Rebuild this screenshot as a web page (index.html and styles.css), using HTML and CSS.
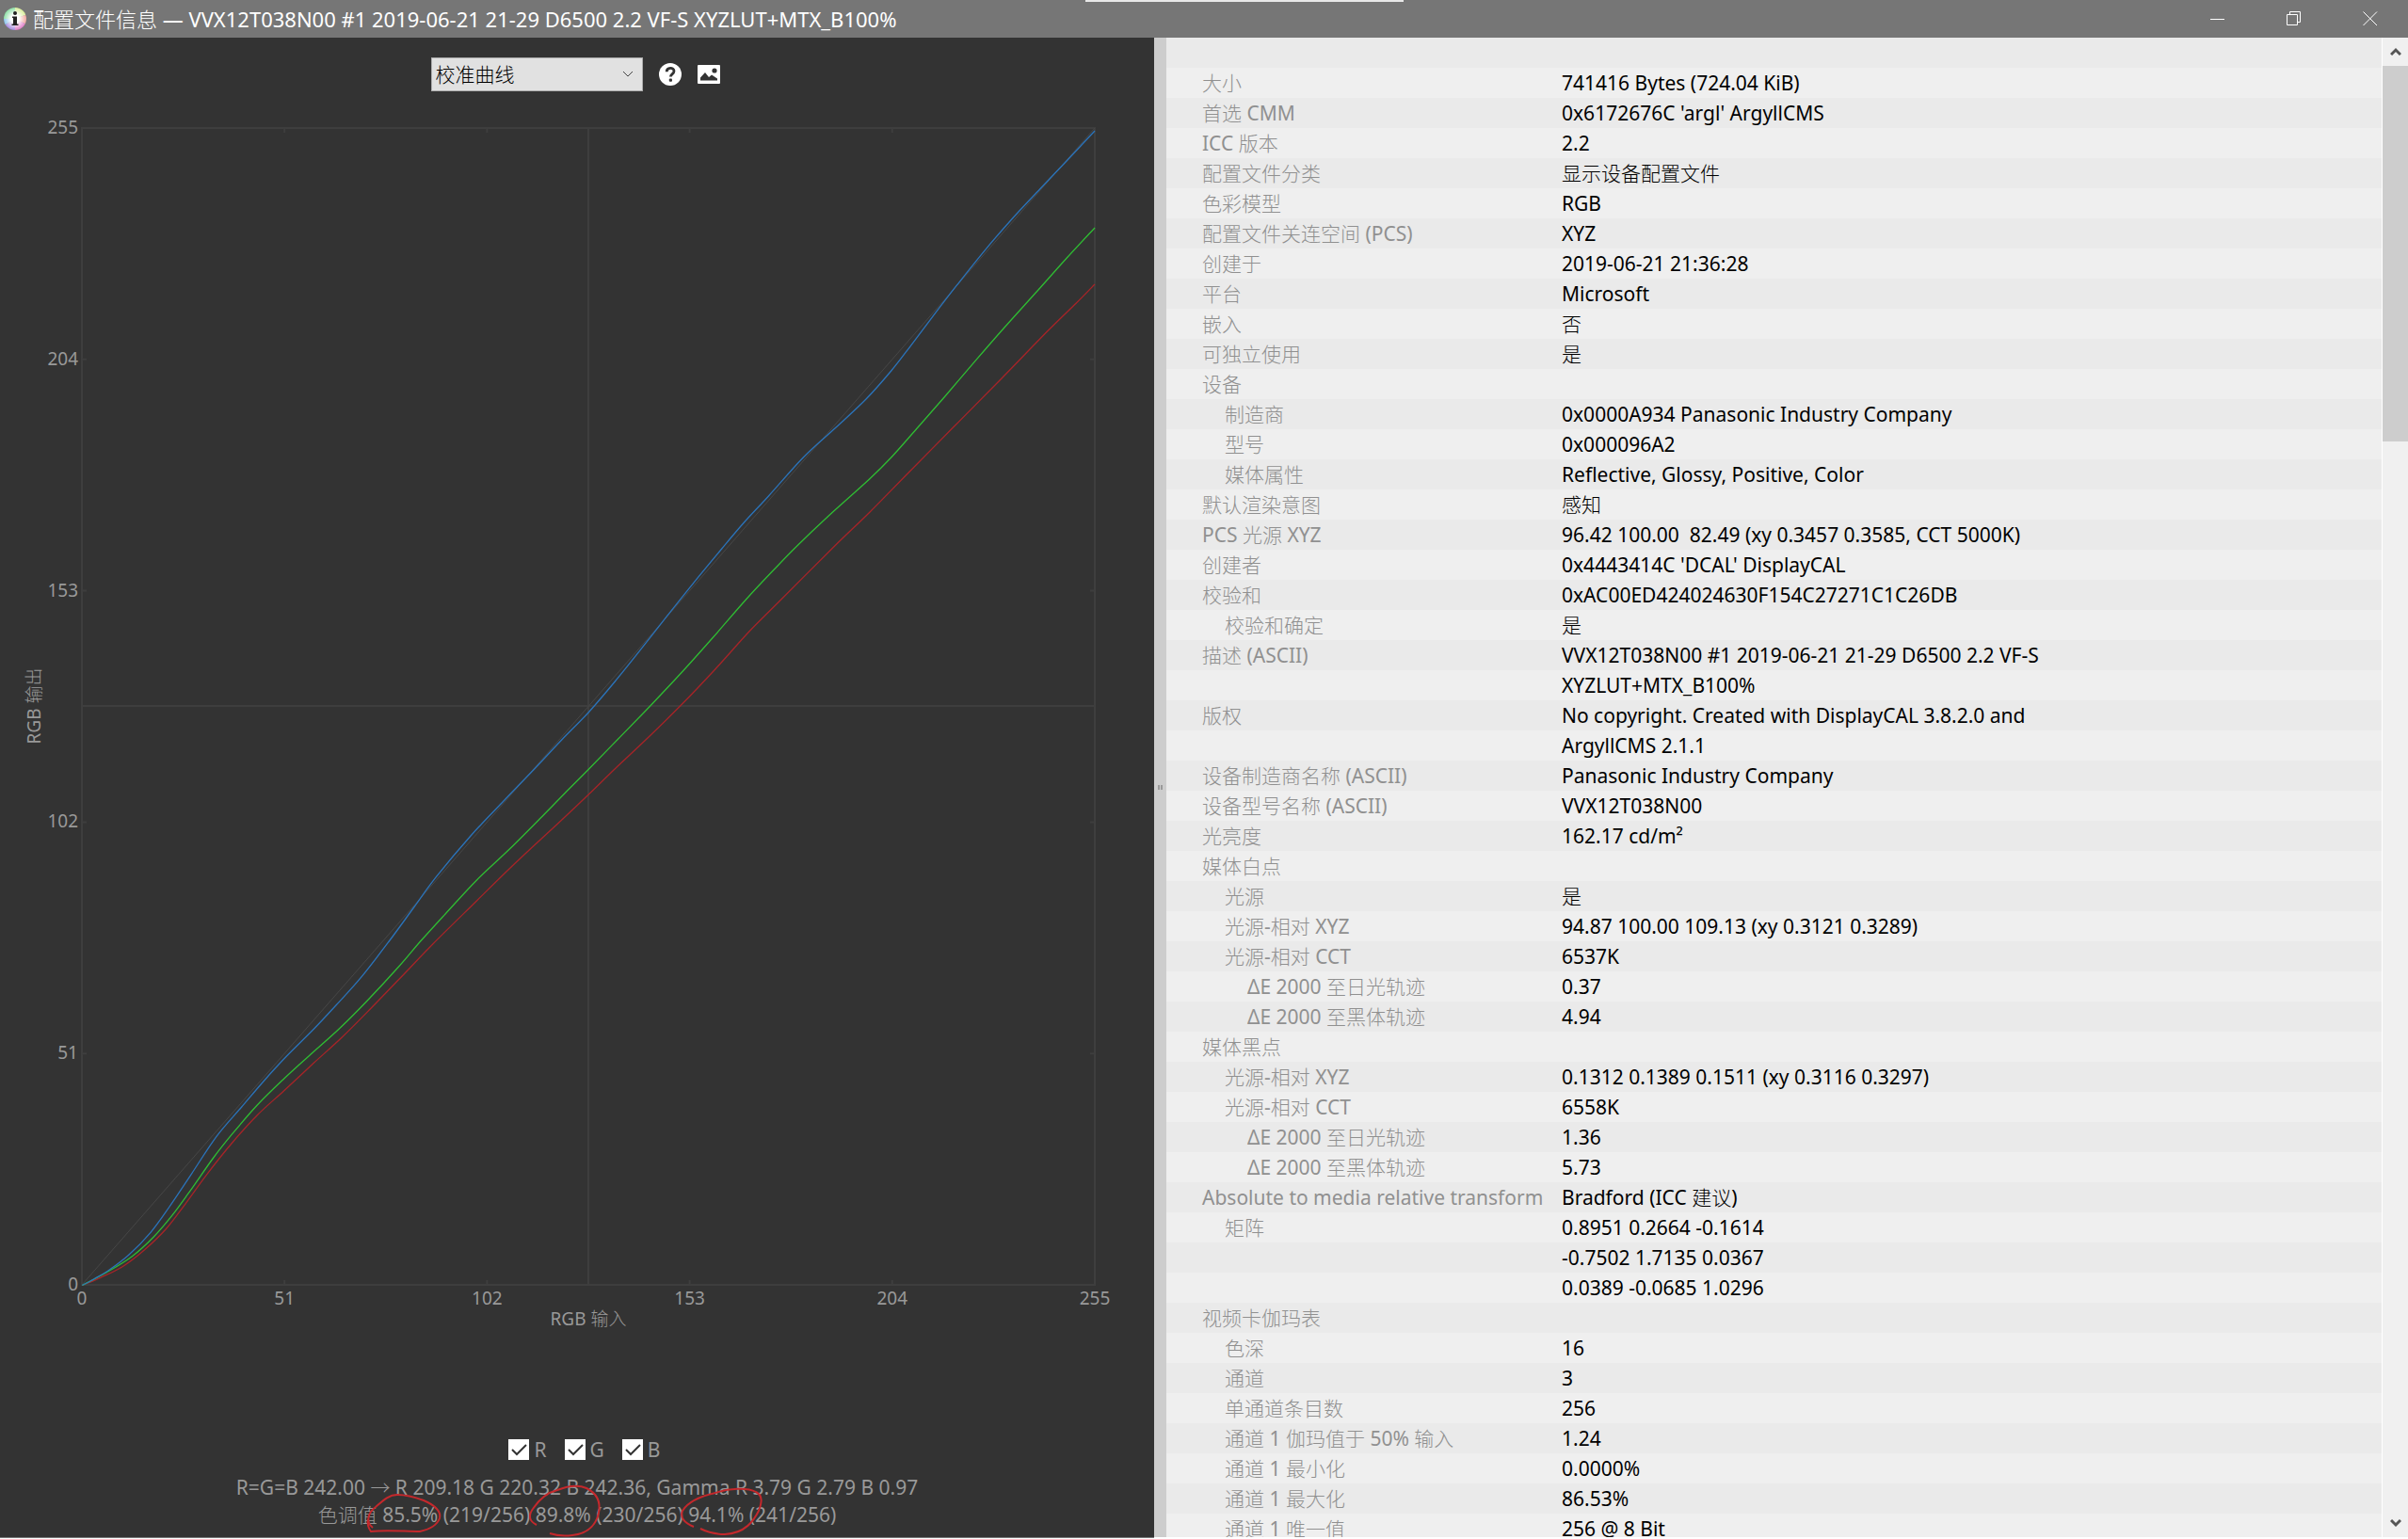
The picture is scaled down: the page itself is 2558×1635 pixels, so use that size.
FILE: index.html
```html
<!DOCTYPE html>
<html lang="zh-CN">
<head>
<meta charset="utf-8">
<title>配置文件信息</title>
<link rel="stylesheet" href="styles.css">
</head>
<body>
<header class="titlebar">
  <svg class="app-icon" viewBox="0 0 26 26" aria-hidden="true">
    <defs>
      <radialGradient id="core"><stop offset="0.35" stop-color="#fff"/><stop offset="1" stop-color="#fff" stop-opacity="0"/></radialGradient>
      <clipPath id="disc"><circle cx="13" cy="13" r="12"/></clipPath>
    </defs>
    <g clip-path="url(#disc)">
      <path d="M13 13V-6H-6V13z" fill="#8fe0a8"/>
      <path d="M13 13V-6H32V6z" fill="#d9ee9c"/>
      <path d="M13 13L32 6V22z" fill="#f0a8a0"/>
      <path d="M13 13L32 22V32H13z" fill="#e07fc8"/>
      <path d="M13 13V32H-6V24z" fill="#a68be0"/>
      <path d="M13 13L-6 24V13z" fill="#8cc4ee"/>
    </g>
    <circle cx="13" cy="13" r="12" fill="url(#core)"/>
    <circle cx="13" cy="7" r="2" fill="#222"/>
    <path d="M10 10.500h5v8h1.500v1.500h-7v-1.500H11v-6.500h-1z" fill="#222"/>
  </svg>
  <h1 class="window-title">配置文件信息 — VVX12T038N00 #1 2019-06-21 21-29 D6500 2.2 VF-S XYZLUT+MTX_B100%</h1>
  <div class="window-buttons">
    <button class="window-button" aria-label="最小化"><svg class="glyph" viewBox="0 0 16 16"><path d="M0 8.500h15"/></svg></button>
    <button class="window-button" aria-label="还原"><svg class="glyph" viewBox="0 0 16 16"><path d="M.5 3.500h11v11H.5zM3.500 3.500v-3h11v11h-3"/></svg></button>
    <button class="window-button" aria-label="关闭"><svg class="glyph" viewBox="0 0 16 16"><path d="M.5 .5l14.500 14.500M15 .5L.5 15"/></svg></button>
  </div>
  <div class="top-handle"></div>
</header>
<main class="content">
  <section class="plot-pane">
    <div class="toolbar">
      <select class="plot-select" aria-label="图表"><option>校准曲线</option></select>
      <button class="icon-button" aria-label="帮助">
        <svg class="tool-icon" viewBox="0 0 24 24"><circle cx="12" cy="12" r="12" fill="#fff"/><path d="M8.200 9.200c0-5 7.800-5 7.800-.6 0 3-3.600 3-3.600 6" fill="none" stroke="#333" stroke-width="2.800"/><rect x="10.800" y="16.600" width="3.200" height="3.200" rx="1" fill="#333"/></svg>
      </button>
      <button class="icon-button" aria-label="保存图像">
        <svg class="tool-icon" viewBox="0 0 24 24"><rect y="2" width="24" height="20" rx="1" fill="#fff"/><path d="M3 18.500v-3l5-5.500 4 5 3-2.500 6 4v2z" fill="#333"/><circle cx="18" cy="8" r="2.600" fill="#333"/></svg>
      </button>
    </div>
    <svg class="chart" viewBox="0 110 1226 1320" role="img" aria-label="校准曲线">
      <g class="grid" id="grid"></g>
      <path class="diagonal" d="M87 1365L1163 136"/>
      <g class="curves" id="curves"></g>
      <g class="ticks" id="ticks"></g>
      <text class="axis-title" x="625" y="1408">RGB 输入</text>
      <text class="axis-title" transform="translate(43 750) rotate(-90)">RGB 输出</text>
    </svg>
    <div class="channels">
      <label class="channel"><input class="tick-box" type="checkbox" checked>R</label>
      <label class="channel"><input class="tick-box" type="checkbox" checked>G</label>
      <label class="channel"><input class="tick-box" type="checkbox" checked>B</label>
    </div>
    <div class="readout">
      <p class="readout-line">R=G=B 242.00 → R 209.18 G 220.32 B 242.36, Gamma R 3.79 G 2.79 B 0.97</p>
      <p class="readout-line">色调值 85.5% (219/256) 89.8% (230/256) 94.1% (241/256)</p>
      <svg class="marks" viewBox="380 1573 440 60" aria-hidden="true">
        <path d="M396 1623C388 1617 391 1607 399 1601C407 1594 413 1588 422 1588C434 1588 442 1591 450 1594C462 1599 469 1606 467 1613C464 1621 455 1625 446 1627C430 1627 410 1625 394 1627C391 1623 390 1619 391 1614"/>
        <path d="M570 1620C562 1616 561 1610 566 1603C572 1594 580 1586 592 1583C602 1579 614 1577 623 1581C635 1587 638 1597 636 1607C634 1617 627 1629 608 1631C600 1632 590 1631 584 1629"/>
        <path d="M737 1622C727 1618 722 1612 725 1605C730 1597 742 1590 760 1586C774 1581 794 1580 803 1585C811 1589 809 1597 806 1605C801 1615 792 1629 770 1630C758 1630 750 1627 744 1624"/>
      </svg>
    </div>
  </section>
  <div class="splitter"><span class="grip"></span></div>
  <section class="info-pane">
    <div class="table-wrap">
      <table class="info">
        <tbody>
          <tr><th></th><td></td></tr>
          <tr><th>大小</th><td>741416 Bytes (724.04 KiB)</td></tr>
          <tr><th>首选 CMM</th><td>0x6172676C 'argl' ArgyllCMS</td></tr>
          <tr><th>ICC 版本</th><td>2.2</td></tr>
          <tr><th>配置文件分类</th><td>显示设备配置文件</td></tr>
          <tr><th>色彩模型</th><td>RGB</td></tr>
          <tr><th>配置文件关连空间 (PCS)</th><td>XYZ</td></tr>
          <tr><th>创建于</th><td>2019-06-21 21:36:28</td></tr>
          <tr><th>平台</th><td>Microsoft</td></tr>
          <tr><th>嵌入</th><td>否</td></tr>
          <tr><th>可独立使用</th><td>是</td></tr>
          <tr><th>设备</th><td></td></tr>
          <tr><th class="sub">制造商</th><td>0x0000A934 Panasonic Industry Company</td></tr>
          <tr><th class="sub">型号</th><td>0x000096A2</td></tr>
          <tr><th class="sub">媒体属性</th><td>Reflective, Glossy, Positive, Color</td></tr>
          <tr><th>默认渲染意图</th><td>感知</td></tr>
          <tr><th>PCS 光源 XYZ</th><td>96.42 100.00  82.49 (xy 0.3457 0.3585, CCT 5000K)</td></tr>
          <tr><th>创建者</th><td>0x4443414C 'DCAL' DisplayCAL</td></tr>
          <tr><th>校验和</th><td>0xAC00ED424024630F154C27271C1C26DB</td></tr>
          <tr><th class="sub">校验和确定</th><td>是</td></tr>
          <tr><th>描述 (ASCII)</th><td>VVX12T038N00 #1 2019-06-21 21-29 D6500 2.2 VF-S</td></tr>
          <tr><th></th><td>XYZLUT+MTX_B100%</td></tr>
          <tr><th>版权</th><td>No copyright. Created with DisplayCAL 3.8.2.0 and</td></tr>
          <tr><th></th><td>ArgyllCMS 2.1.1</td></tr>
          <tr><th>设备制造商名称 (ASCII)</th><td>Panasonic Industry Company</td></tr>
          <tr><th>设备型号名称 (ASCII)</th><td>VVX12T038N00</td></tr>
          <tr><th>光亮度</th><td>162.17 cd/m²</td></tr>
          <tr><th>媒体白点</th><td></td></tr>
          <tr><th class="sub">光源</th><td>是</td></tr>
          <tr><th class="sub">光源-相对 XYZ</th><td>94.87 100.00 109.13 (xy 0.3121 0.3289)</td></tr>
          <tr><th class="sub">光源-相对 CCT</th><td>6537K</td></tr>
          <tr><th class="sub-sub">ΔE 2000 至日光轨迹</th><td>0.37</td></tr>
          <tr><th class="sub-sub">ΔE 2000 至黑体轨迹</th><td>4.94</td></tr>
          <tr><th>媒体黑点</th><td></td></tr>
          <tr><th class="sub">光源-相对 XYZ</th><td>0.1312 0.1389 0.1511 (xy 0.3116 0.3297)</td></tr>
          <tr><th class="sub">光源-相对 CCT</th><td>6558K</td></tr>
          <tr><th class="sub-sub">ΔE 2000 至日光轨迹</th><td>1.36</td></tr>
          <tr><th class="sub-sub">ΔE 2000 至黑体轨迹</th><td>5.73</td></tr>
          <tr><th>Absolute to media relative transform</th><td>Bradford (ICC 建议)</td></tr>
          <tr><th class="sub">矩阵</th><td>0.8951 0.2664 -0.1614</td></tr>
          <tr><th></th><td>-0.7502 1.7135 0.0367</td></tr>
          <tr><th></th><td>0.0389 -0.0685 1.0296</td></tr>
          <tr><th>视频卡伽玛表</th><td></td></tr>
          <tr><th class="sub">色深</th><td>16</td></tr>
          <tr><th class="sub">通道</th><td>3</td></tr>
          <tr><th class="sub">单通道条目数</th><td>256</td></tr>
          <tr><th class="sub">通道 1 伽玛值于 50% 输入</th><td>1.24</td></tr>
          <tr><th class="sub">通道 1 最小化</th><td>0.0000%</td></tr>
          <tr><th class="sub">通道 1 最大化</th><td>86.53%</td></tr>
          <tr><th class="sub">通道 1 唯一值</th><td>256 @ 8 Bit</td></tr>
        </tbody>
      </table>
    </div>
    <div class="scrollbar">
      <button class="scroll-button" aria-label="向上"><svg class="arrow" viewBox="0 0 12 10"><path d="M1 8L6 3l5 5"/></svg></button>
      <div class="track"><div class="thumb"></div></div>
      <button class="scroll-button" aria-label="向下"><svg class="arrow" viewBox="0 0 12 10"><path d="M1 2l5 5 5-5"/></svg></button>
    </div>
  </section>
</main>
<script src="chart.js"></script>
</body>
</html>
```

FILE: styles.css
```css
* {
  box-sizing: border-box;
}

body {
  margin: 0;
  height: 100vh;
  display: flex;
  flex-direction: column;
  overflow: hidden;
  background: #fff;
  font-family: "Noto Sans", "Noto Sans CJK SC Light", "Noto Sans CJK SC DemiLight", "Noto Sans CJK SC", sans-serif;
  font-size: 21px;
  line-height: 32px;
}

button {
  border: 0;
  padding: 0;
  background: none;
}

/* Title bar */
.titlebar {
  position: relative;
  flex: none;
  height: 40px;
  display: flex;
  align-items: center;
  padding-left: 3px;
  background: #767676;
  color: #fff;
}

.app-icon {
  width: 26px;
  height: 26px;
}

.window-title {
  flex: 1;
  margin: 0;
  padding-left: 6px;
  font-size: 22px;
  font-weight: 400;
  white-space: nowrap;
}

.window-buttons {
  display: flex;
}

.window-button {
  width: 81px;
  height: 40px;
  display: flex;
  align-items: center;
  justify-content: center;
}

.glyph {
  width: 16px;
  height: 16px;
  fill: none;
  stroke: #fff;
  stroke-width: 1;
}

.top-handle {
  position: absolute;
  top: 0;
  left: 1153px;
  width: 338px;
  height: 2px;
  background: #e8e8e8;
}

/* Panes */
.content {
  flex: 1;
  min-height: 0;
  display: grid;
  grid-template-columns: 1226fr 13px 1319fr;
  grid-template-rows: 100%;
  padding-bottom: 2px;
}

.plot-pane {
  display: flex;
  flex-direction: column;
  background: #333;
  color: #999;
  box-shadow: 0 1px #777;
}

.toolbar {
  height: 70px;
  display: flex;
  align-items: center;
  justify-content: center;
  gap: 17px;
  padding: 8px 4px 0 0;
}

.plot-select {
  appearance: none;
  width: 225px;
  height: 36px;
  padding: 0 4px;
  border: 1px solid #adadad;
  border-radius: 0;
  color: #000;
  background: #e1e1e1 url("data:image/svg+xml,%3Csvg xmlns='http://www.w3.org/2000/svg' width='12' height='8'%3E%3Cpath d='M1 1l5 5 5-5' fill='none' stroke='%23444'/%3E%3C/svg%3E") no-repeat right 9px center;
  font: inherit;
}

.icon-button,
.tool-icon {
  width: 24px;
  height: 24px;
  display: block;
}

.chart {
  display: block;
  width: 100%;
  flex: none;
}

.grid,
.diagonal {
  fill: none;
  stroke: #474747;
  stroke-width: 1;
}

.grid {
  stroke-width: 2;
  stroke: #3e3e3e;
}

.curves {
  fill: none;
  stroke-width: 1.3;
}

.curve-red { stroke: #a82428; }
.curve-green { stroke: #2fbd33; }
.curve-blue { stroke: #2b74bb; }

.ticks,
.axis-title {
  fill: #999;
  font-size: 19px;
}

.axis-title,
.tick-x {
  text-anchor: middle;
}

.tick-y {
  text-anchor: end;
}

.channels {
  margin-top: auto;
  display: flex;
  justify-content: center;
  gap: 19px;
  padding-left: 16px;
}

.channel {
  display: flex;
  align-items: center;
  gap: 5px;
}

.tick-box {
  appearance: none;
  width: 22px;
  height: 22px;
  margin: 0;
  background: #fff url("data:image/svg+xml,%3Csvg xmlns='http://www.w3.org/2000/svg' width='22' height='22'%3E%3Cpath d='M4 11l5 5L19 6' fill='none' stroke='%23333' stroke-width='2'/%3E%3C/svg%3E");
}

.readout {
  position: relative;
  padding: 10px 0 9px;
  text-align: center;
}

.readout-line {
  margin: 0;
  line-height: 29px;
}

.marks {
  position: absolute;
  left: calc(50% - 233px);
  bottom: 0;
  width: 440px;
  height: 60px;
  overflow: visible;
  fill: none;
  stroke: #c4282c;
  stroke-width: 2;
}

.splitter {
  display: flex;
  align-items: center;
  justify-content: center;
  background: #cdcdcd;
}

.grip {
  width: 5px;
  height: 5px;
  border: solid #999;
  border-width: 0 2px;
}

.info-pane {
  min-width: 0;
  display: flex;
  background: #efefef;
}

.table-wrap {
  flex: 1;
  min-width: 0;
  overflow: hidden;
}

.info {
  width: 100%;
  table-layout: fixed;
  border-collapse: collapse;
  white-space: pre;
}

.info tr {
  height: 32px;
  background: #efefef;
}

.info tr:nth-child(odd) {
  background: #eaeaea;
}

.info th {
  width: 420px;
  padding: 0 0 0 38px;
  color: #909090;
  font-weight: 400;
  text-align: left;
}

.info th.sub {
  padding-left: 62px;
}

.info th.sub-sub {
  padding-left: 86px;
}

.info td {
  padding: 0;
  color: #000;
}

.scrollbar {
  width: 28px;
  flex: none;
  display: flex;
  flex-direction: column;
  border-left: 1px solid #fff;
  background: #f0f0f0;
}

.scroll-button {
  height: 30px;
  display: flex;
  align-items: center;
  justify-content: center;
}

.arrow {
  width: 12px;
  height: 10px;
  fill: none;
  stroke: #555;
  stroke-width: 3;
}

.track {
  flex: 1;
}

.thumb {
  height: 26%;
  background: #cdcdcd;
}
```

FILE: chart.js
```js
// Plot area inside the chart's viewBox.
const area = { left: 87, right: 1163, top: 136, bottom: 1365 };

const curves = {
  red: [[87.3,1365.5],[106.7,1357.3],[130,1345.7],[153.3,1328],[176.7,1305.3],[196.7,1279.3],[220,1247.3],[246.7,1214],[273.3,1184.7],[301.7,1158.7],[333.3,1129.3],[363.3,1102],[393.3,1072],[430,1034],[460,1002.7],[506.7,956.7],[540,924],[573.3,892.7],[600,868],[625.3,844],[653.3,816.7],[686.7,785.3],[723.3,749.3],[760,710.7],[796.7,670],[826.7,640],[886.7,580],[923.3,544.7],[963.3,504],[1013.3,453.3],[1063.3,402.7],[1113.3,351.3],[1143.3,322],[1163,302]],
  green: [[87.3,1365.5],[113.3,1351.7],[140,1335],[163.3,1314],[183.3,1290.7],[203.3,1263.3],[226.7,1230],[246.7,1204.7],[273.3,1174],[301.7,1146],[328.3,1121.7],[360,1093.3],[390,1063.3],[423.3,1027.3],[447.3,999.3],[473.3,970.7],[506.7,934.7],[540,903.3],[573.3,870],[600,842.7],[625.3,817.3],[656.7,785],[690,750.7],[723.3,715.3],[756.7,678],[793.3,636],[823.3,604],[846.7,580],[880,548.3],[923.3,509.3],[946.7,486],[973.3,456],[1003.3,421.7],[1036.7,382.7],[1066.7,348.3],[1100,311.3],[1133.3,274],[1163,242]],
  blue: [[87.3,1365.5],[100,1358.7],[116.7,1348.7],[136.7,1333.3],[160,1309.3],[180,1282],[203.3,1247.3],[230,1207.3],[256.7,1176],[280,1148.7],[303.3,1123.3],[333.3,1093.3],[356.7,1068.3],[383.3,1038.7],[413.3,1000],[440,963.5],[463.3,931.7],[500,888],[533.3,852.7],[566.7,818],[596.7,786],[625.3,756.7],[653.3,724],[683.3,686.7],[710,652.7],[736.7,619.3],[766.7,583],[790,555.5],[816.7,526.7],[853.3,486],[886.7,455.3],[920,424],[946.7,394],[966.7,368.3],[990,337.3],[1016.7,302.7],[1046.7,265.3],[1076.7,230.7],[1106.7,198.7],[1133.3,170.7],[1163,139]]
};

function add(parent, tag, attrs, text) {
  const node = document.createElementNS("http://www.w3.org/2000/svg", tag);
  for (const [key, value] of Object.entries(attrs)) node.setAttribute(key, value);
  if (text !== undefined) node.textContent = text;
  document.getElementById(parent).appendChild(node);
}

// Smooth path through the sample points (Catmull-Rom to Bezier).
function smooth(points) {
  let d = `M${points[0]}`;
  for (let i = 0; i < points.length - 1; i++) {
    const p0 = points[i - 1] || points[i];
    const p1 = points[i];
    const p2 = points[i + 1];
    const p3 = points[i + 2] || p2;
    const c1 = [p1[0] + (p2[0] - p0[0]) / 6, p1[1] + (p2[1] - p0[1]) / 6];
    const c2 = [p2[0] - (p3[0] - p1[0]) / 6, p2[1] - (p3[1] - p1[1]) / 6];
    d += `C${c1} ${c2} ${p2}`;
  }
  return d;
}

const { left, right, top: upper, bottom } = area;
add("grid", "path", { d: `M${left} ${upper}H${right}V${bottom}H${left}zM625 ${upper}V${bottom}M${left} 750H${right}` });

for (let value = 0; value <= 255; value += 51) {
  const x = left + (right - left) * value / 255;
  const y = bottom - (bottom - upper) * value / 255;
  add("grid", "path", { d: `M${x} ${bottom}v-5M${x} ${upper}v5M${left} ${y}h5M${right} ${y}h-5` });
  add("ticks", "text", { class: "tick-x", x: x, y: 1386 }, value);
  add("ticks", "text", { class: "tick-y", x: 83, y: y + 6 }, value);
}

for (const [name, points] of Object.entries(curves)) {
  add("curves", "path", { class: `curve-${name}`, d: smooth(points) });
}
```
